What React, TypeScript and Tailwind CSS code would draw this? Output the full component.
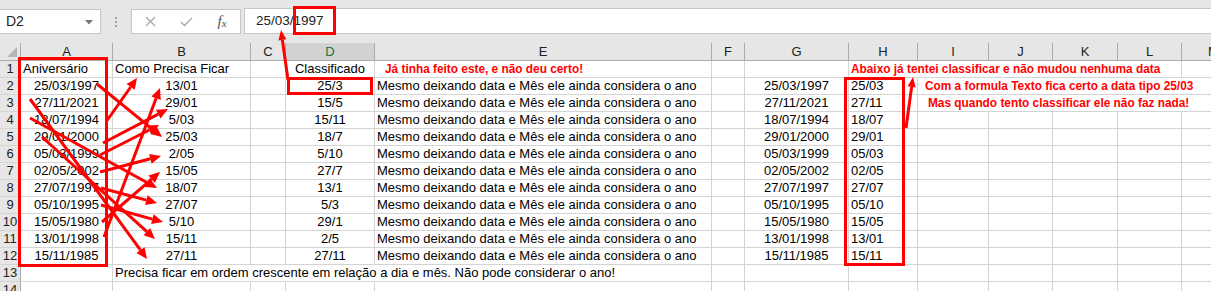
import React from 'react';

type Cell = {
  w: string;
  text?: string;
  cls?: string;
  red?: boolean;
};

const W = {
  A: 'w-[92px]',
  B: 'w-[138px]',
  C: 'w-[35px]',
  D: 'w-[89px]',
  E: 'w-[337px]',
  F: 'w-[33px]',
  G: 'w-[104px]',
  H: 'w-[69px]',
  I: 'w-[71px]',
  J: 'w-[64px]',
  K: 'w-[65px]',
  L: 'w-[64px]',
  M: 'w-[64px]',
  HL: 'w-[333px]',
  IM: 'w-[328px]',
  BE: 'w-[599px]',
};

const letters: [string, string][] = [
  ['A', W.A], ['B', W.B], ['C', W.C], ['D', W.D], ['E', W.E], ['F', W.F], ['G', W.G],
  ['H', W.H], ['I', W.I], ['J', W.J], ['K', W.K], ['L', W.L], ['M', W.M],
];

const colA = ['25/03/1997', '27/11/2021', '18/07/1994', '29/01/2000', '05/03/1999', '02/05/2002', '27/07/1997', '05/10/1995', '15/05/1980', '13/01/1998', '15/11/1985'];
const colB = ['13/01', '29/01', '5/03', '25/03', '2/05', '15/05', '18/07', '27/07', '5/10', '15/11', '27/11'];
const colD = ['25/3', '15/5', '15/11', '18/7', '5/10', '27/7', '13/1', '5/3', '29/1', '2/5', '27/11'];
const colH = ['25/03', '27/11', '18/07', '29/01', '05/03', '02/05', '27/07', '05/10', '15/05', '13/01', '15/11'];

const MESMO = 'Mesmo deixando data e Mês ele ainda considera o ano';

function buildRows(): Cell[][] {
  const rows: Cell[][] = [];
  rows.push([
    { w: W.A, text: 'Aniversário', cls: 'pl-[2px]' },
    { w: W.B, text: 'Como Precisa Ficar', cls: 'pl-[2px]' },
    { w: W.C },
    { w: W.D, text: 'Classificado', cls: 'justify-center' },
    { w: W.E, text: 'Já tinha feito este, e não deu certo!', cls: 'pl-[10px]', red: true },
    { w: W.F },
    { w: W.G },
    { w: W.HL, text: 'Abaixo já tentei classificar e não mudou nenhuma data', cls: 'pl-[2px]', red: true },
    { w: W.M },
  ]);
  for (let i = 0; i < 11; i++) {
    const r: Cell[] = [
      { w: W.A, text: colA[i], cls: 'justify-center' },
      { w: W.B, text: colB[i], cls: 'justify-center' },
      { w: W.C },
      { w: W.D, text: colD[i], cls: 'justify-center' },
      { w: W.E, text: MESMO, cls: 'pl-[2px]' },
      { w: W.F },
      { w: W.G, text: colA[i], cls: 'justify-center' },
      { w: W.H, text: colH[i], cls: 'pl-[2px]' },
    ];
    if (i === 0) {
      r.push({ w: W.IM, text: 'Com a formula Texto fica certo a data tipo 25/03', cls: 'pl-[7px]', red: true });
    } else if (i === 1) {
      r.push({ w: W.IM, text: 'Mas quando tento classificar ele não faz nada!', cls: 'pl-[10px]', red: true });
    } else {
      r.push({ w: W.I }, { w: W.J }, { w: W.K }, { w: W.L }, { w: W.M });
    }
    rows.push(r);
  }
  rows.push([
    { w: W.A },
    { w: W.BE, text: 'Precisa ficar em ordem crescente em relação a dia e mês. Não pode considerar o ano!', cls: 'pl-[2px]' },
    { w: W.F }, { w: W.G }, { w: W.H }, { w: W.I }, { w: W.J }, { w: W.K }, { w: W.L }, { w: W.M },
  ]);
  rows.push(letters.map(([, w]) => ({ w })));
  return rows;
}

type Arrow = [number, number, number, number];

const arrows: Arrow[] = [
  [97, 84, 162, 137],
  [30, 99, 147, 259],
  [30, 118, 157, 188],
  [103, 143, 168, 109],
  [100, 155, 159, 125],
  [106, 122, 137, 78],
  [100, 172, 161, 156],
  [101, 188, 157, 203],
  [101, 205, 163, 222],
  [102, 222, 160, 172],
  [104, 237, 160, 88],
  [42, 137, 155, 239],
];

function ArrowShape({ a, len = 11, half = 5 }: { a: Arrow; len?: number; half?: number }) {
  const [x1, y1, x2, y2] = a;
  const dx = x2 - x1;
  const dy = y2 - y1;
  const d = Math.hypot(dx, dy);
  const ux = dx / d;
  const uy = dy / d;
  const bx = x2 - ux * len;
  const by = y2 - uy * len;
  const px = -uy * half;
  const py = ux * half;
  return (
    <g>
      <line x1={x1} y1={y1} x2={bx} y2={by} stroke="#ff0000" strokeWidth={3} />
      <polygon points={`${x2},${y2} ${bx + px},${by + py} ${bx - px},${by - py}`} fill="#ff0000" />
    </g>
  );
}

export default function App() {
  const rows = buildRows();
  return (
    <div className="relative h-[291px] w-[1211px] overflow-hidden bg-white font-['Liberation_Sans',Arial,sans-serif] text-black">
      {/* formula bar area */}
      <div className="flex h-[43px] items-start bg-[#e6e6e6] pt-[9px]">
        <div className="relative flex h-[25px] w-[101px] shrink-0 items-center border border-l-0 border-[#c6c6c6] bg-white pl-[6px] text-[14px] text-[#222]">
          D2
          <svg className="absolute right-[7px] top-[10px]" width="8" height="5" viewBox="0 0 8 5">
            <polygon points="0,0 8,0 4,4.5" fill="#777" />
          </svg>
        </div>
        <div className="flex h-[25px] w-[30px] shrink-0 flex-col items-center justify-center gap-[2px]">
          <span className="h-[2px] w-[2px] bg-[#a0a0a0]" />
          <span className="h-[2px] w-[2px] bg-[#a0a0a0]" />
          <span className="h-[2px] w-[2px] bg-[#a0a0a0]" />
        </div>
        <div className="flex h-[25px] w-[110px] shrink-0 items-center border border-[#c6c6c6] bg-white">
          <div className="flex w-[36px] justify-center">
            <svg width="11" height="11" viewBox="0 0 11 11">
              <path d="M1 1 L10 10 M10 1 L1 10" stroke="#a8a8a8" strokeWidth="1.3" fill="none" />
            </svg>
          </div>
          <div className="flex w-[36px] justify-center">
            <svg width="13" height="10" viewBox="0 0 13 10">
              <path d="M1 5 L4.5 8.5 L12 1" stroke="#a8a8a8" strokeWidth="1.4" fill="none" />
            </svg>
          </div>
          <div className="flex w-[36px] items-end justify-center font-['Liberation_Serif',serif] italic text-[#555]">
            <span className="text-[15px] leading-none">f</span>
            <span className="text-[11px] leading-none">x</span>
          </div>
        </div>
        <div className="ml-[3px] -mt-px flex h-[26px] flex-1 items-center border border-r-0 border-[#c6c6c6] bg-white pl-[11px] text-[13.5px] text-[#222]">
          25/03/1997
        </div>
      </div>

      {/* column headers */}
      <div className="flex h-[18px] bg-[#e6e6e6] text-[13px] text-[#222]">
        <div className="relative w-[21px] shrink-0 border-b border-r border-[#ababab]">
          <svg className="absolute bottom-[3px] right-[3px]" width="10" height="10" viewBox="0 0 10 10">
            <polygon points="10,0 10,10 0,10" fill="#b5b5b5" />
          </svg>
        </div>
        {letters.map(([l, w]) => (
          <div
            key={l}
            className={`${w} flex shrink-0 items-center justify-center border-b border-r border-[#ababab] ${
              l === 'D' ? 'bg-[#d2d2d2] text-[#217346]' : ''
            }`}
          >
            {l}
          </div>
        ))}
      </div>

      {/* rows */}
      {rows.map((r, ri) => (
        <div key={ri} className="flex h-[17px]">
          <div className="flex w-[21px] shrink-0 items-center justify-center border-b border-r border-b-[#d4d4d4] border-r-[#ababab] bg-[#e6e6e6] text-[13px] text-[#222]">
            {ri + 1}
          </div>
          {r.map((c, ci) => (
            <div
              key={ci}
              className={`${c.w} flex shrink-0 items-center whitespace-nowrap border-b border-r border-[#d4d4d4] leading-[16px] ${
                c.red ? 'text-[11.85px] font-bold text-[#ff0000]' : 'text-[13px]'
              } ${c.cls ?? ''}`}
            >
              {c.text}
            </div>
          ))}
        </div>
      ))}

      {/* annotations */}
      <svg className="pointer-events-none absolute left-0 top-0" width="1211" height="291" viewBox="0 0 1211 291">
        <rect x="294.5" y="7.5" width="40" height="26" fill="none" stroke="#ff0000" strokeWidth="3" />
        <rect x="19.5" y="58.5" width="87" height="207" fill="none" stroke="#ff0000" strokeWidth="3" />
        <rect x="288.5" y="78.5" width="83" height="15" fill="none" stroke="#ff0000" strokeWidth="3" />
        <rect x="845.5" y="78.5" width="58" height="186" fill="none" stroke="#ff0000" strokeWidth="3" />
        <ArrowShape a={[288, 80, 281, 30]} len={10} half={4} />
        <ArrowShape a={[906, 128, 913, 77]} len={10} half={4} />
        {arrows.map((a, i) => (
          <ArrowShape key={i} a={a} />
        ))}
      </svg>
    </div>
  );
}
